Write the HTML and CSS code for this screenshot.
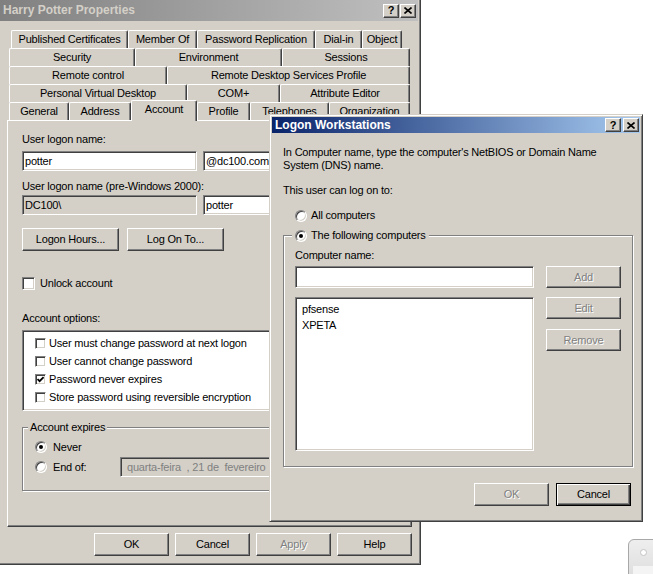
FILE: index.html
```html
<!DOCTYPE html>
<html lang="en">

<head>
    <meta charset="UTF-8">
    <title>Harry Potter Properties</title>
    <link rel="stylesheet" href="styles.css">
</head>

<body>
<div class="window props">
    <div class="caption inactive">
        <span class="caption-text">Harry Potter Properties</span>
        <span class="caption-btns">
            <span class="cap-btn">?</span>
            <span class="cap-btn"><svg width="8" height="7" viewBox="0 0 8 7"><path d="M0.5 0.5 L7.5 6.5 M7.5 0.5 L0.5 6.5" stroke="#000" stroke-width="1.6"/></svg></span>
        </span>
    </div>

    <div class="tabs">
        <div class="tab-row row1">
            <span class="tab">Published Certificates</span>
            <span class="tab">Member Of</span>
            <span class="tab">Password Replication</span>
            <span class="tab">Dial-in</span>
            <span class="tab">Object</span>
        </div>
        <div class="tab-row row2">
            <span class="tab">Security</span>
            <span class="tab">Environment</span>
            <span class="tab">Sessions</span>
        </div>
        <div class="tab-row row3">
            <span class="tab">Remote control</span>
            <span class="tab">Remote Desktop Services Profile</span>
        </div>
        <div class="tab-row row4">
            <span class="tab">Personal Virtual Desktop</span>
            <span class="tab">COM+</span>
            <span class="tab">Attribute Editor</span>
        </div>
        <div class="tab-row row5">
            <span class="tab">General</span>
            <span class="tab">Address</span>
            <span class="tab active">Account</span>
            <span class="tab">Profile</span>
            <span class="tab">Telephones</span>
            <span class="tab">Organization</span>
        </div>
    </div>

    <div class="panel">
        <div class="lbl">User logon name:</div>
        <div class="field-row first">
            <div class="edit name">potter</div>
            <div class="edit rest">@dc100.com</div>
        </div>

        <div class="lbl second">User logon name (pre-Windows 2000):</div>
        <div class="field-row">
            <div class="edit name readonly">DC100\</div>
            <div class="edit rest">potter</div>
        </div>

        <div class="btn-row">
            <span class="btn wide">Logon Hours...</span>
            <span class="btn wide">Log On To...</span>
        </div>

        <div class="check-row unlock">
            <span class="chk"></span>
            <span>Unlock account</span>
        </div>

        <div class="lbl options">Account options:</div>
        <div class="check-list">
            <div class="check-item"><span class="chk small"></span>User must change password at next logon</div>
            <div class="check-item"><span class="chk small"></span>User cannot change password</div>
            <div class="check-item"><span class="chk small"><svg width="7" height="7" viewBox="0 0 7 7"><path d="M0.5 3 L2.6 5.2 L6.6 1" fill="none" stroke="#000" stroke-width="1.8"/></svg></span>Password never expires</div>
            <div class="check-item"><span class="chk small"></span>Store password using reversible encryption</div>
        </div>

        <fieldset class="group expires">
            <legend>Account expires</legend>
            <div class="group-body">
                <div class="radio-row"><span class="radio on"></span>Never</div>
                <div class="radio-row">
                    <span class="radio-label"><span class="radio"></span>End of:</span>
                    <div class="edit date">quarta-feira &nbsp;, 21 de &nbsp;fevereiro</div>
                </div>
            </div>
        </fieldset>
    </div>

    <div class="dlg-buttons main">
        <span class="btn">OK</span>
        <span class="btn">Cancel</span>
        <span class="btn disabled">Apply</span>
        <span class="btn">Help</span>
    </div>
</div>

<div class="window dialog">
    <div class="caption active">
        <span class="caption-text">Logon Workstations</span>
        <span class="caption-btns">
            <span class="cap-btn">?</span>
            <span class="cap-btn"><svg width="8" height="7" viewBox="0 0 8 7"><path d="M0.5 0.5 L7.5 6.5 M7.5 0.5 L0.5 6.5" stroke="#000" stroke-width="1.6"/></svg></span>
        </span>
    </div>
    <div class="dialog-body">
        <p class="intro">In Computer name, type the computer's NetBIOS or Domain Name<br>System (DNS) name.</p>
        <p class="intro can">This user can log on to:</p>
        <div class="radio-row all"><span class="radio"></span>All computers</div>

        <fieldset class="group computers">
            <legend><span class="radio on"></span>The following computers</legend>
            <div class="group-body">
                <div class="lbl">Computer name:</div>
                <div class="pc-row">
                    <div class="edit pc-name"></div>
                    <span class="btn disabled">Add</span>
                </div>
                <div class="pc-row list-row">
                    <div class="listbox">
                        <div class="list-item">pfsense</div>
                        <div class="list-item">XPETA</div>
                    </div>
                    <div class="side-btns">
                        <span class="btn disabled">Edit</span>
                        <span class="btn disabled">Remove</span>
                    </div>
                </div>
            </div>
        </fieldset>

        <div class="dlg-buttons small">
            <span class="btn disabled">OK</span>
            <span class="btn default">Cancel</span>
        </div>
    </div>
</div>

<div class="peek">
    <span class="peek-dot"></span>
    <span class="peek-inner"></span>
</div>
</body>

</html>
```

FILE: styles.css
```css
body {
    margin: 0;
    background: #fff;
    font-family: "Liberation Sans", Arial, sans-serif;
    font-size: 11px;
    line-height: 13px;
    letter-spacing: -0.2px;
    color: #000;
    height: 574px;
    overflow: hidden;
    position: relative;
}

.window {
    box-sizing: border-box;
    background: #d4d0c8;
}

/* main properties window, top-left of it is off screen */
.props {
    width: 421px;
    height: 565px;
    padding-right: 2px;
    border-right: 1px solid #404040;
    border-bottom: 1px solid #404040;
    box-shadow: inset -1px -1px 0 #808080;
}

.caption {
    display: flex;
    align-items: center;
    justify-content: space-between;
    font-weight: bold;
    font-size: 12px;
    letter-spacing: 0;
    padding-left: 3px;
}

.caption.inactive {
    height: 21px;
    background: linear-gradient(90deg, #808080, #c0c0c0);
    color: #d4d0c8;
}

.caption.active {
    height: 16px;
    background: linear-gradient(90deg, #0a246a, #a6caf0);
    color: #fff;
}

.caption-btns {
    display: flex;
    gap: 1px;
    margin-right: 2px;
}

.dialog .caption-btns {
    gap: 2px;
    margin-right: 1px;
}

.cap-btn {
    box-sizing: border-box;
    width: 16px;
    height: 14px;
    display: flex;
    align-items: center;
    justify-content: center;
    background: #d4d0c8;
    color: #000;
    font-size: 11px;
    border: 1px solid;
    border-color: #fff #404040 #404040 #fff;
    box-shadow: inset -1px -1px 0 #808080;
}

/* tabs */
.tabs {
    margin: 9px 0 0 7px;
}

.tab-row {
    display: grid;
    grid-template-rows: 18px;
    margin-left: 2px;
}

.row1 { grid-template-columns: 117px 69px 118px 47px 40px; margin-left: 4px; }
.row2 { grid-template-columns: 126px 147px 128px; }
.row3 { grid-template-columns: 158px 243px; }
.row4 { grid-template-columns: 178px 93px 130px; }
.row5 { grid-template-columns: 60px 62px 66px 53px 79px 81px; }

.tab {
    box-sizing: border-box;
    height: 18px;
    border-top: 1px solid #fff;
    border-left: 1px solid #fff;
    border-right: 1px solid #404040;
    box-shadow: inset -1px 0 0 #808080;
    border-radius: 2px 2px 0 0;
    background: #d4d0c8;
    text-align: center;
    line-height: 17px;
    white-space: nowrap;
    overflow: hidden;
}

.tab.active {
    position: relative;
    z-index: 1;
    height: 21px;
    margin-top: -2px;
    line-height: 16px;
}

.panel {
    box-sizing: border-box;
    width: 405px;
    height: 407px;
    margin-left: 7px;
    padding: 12px 13px 0 14px;
    border: 1px solid;
    border-color: #fff #404040 #404040 #fff;
    box-shadow: inset -1px -1px 0 #808080;
}

.lbl.second { margin-top: 9px; }
.lbl.options { margin-top: 22px; }

.field-row {
    display: flex;
    gap: 6px;
    margin-top: 2px;
}

.field-row.first { margin-top: 5px; }

.edit {
    box-sizing: border-box;
    height: 20px;
    padding-left: 2px;
    line-height: 18px;
    background: #fff;
    border: 1px solid;
    border-color: #808080 #fff #fff #808080;
    box-shadow: inset 1px 1px 0 #404040, inset -1px -1px 0 #d4d0c8;
    white-space: nowrap;
    overflow: hidden;
}

.edit.name { width: 175px; }
.edit.rest { flex: 1; }
.edit.readonly { background: #d4d0c8; }

.btn {
    box-sizing: border-box;
    width: 75px;
    height: 23px;
    display: inline-flex;
    align-items: center;
    justify-content: center;
    background: #d4d0c8;
    border: 1px solid;
    border-color: #fff #404040 #404040 #fff;
    box-shadow: inset -1px -1px 0 #808080;
}

.btn.disabled {
    color: #808080;
    text-shadow: 1px 1px 0 #fff;
}

.btn.default {
    border-color: #000;
    box-shadow: inset 1px 1px 0 #fff, inset -1px -1px 0 #404040, inset -2px -2px 0 #808080;
}

.btn-row {
    display: flex;
    gap: 8px;
    margin-top: 13px;
}

.btn.wide { width: 97px; }

.check-row {
    display: flex;
    align-items: center;
    gap: 5px;
    height: 13px;
}

.check-row.unlock { margin-top: 26px; }

.chk {
    box-sizing: border-box;
    width: 13px;
    height: 13px;
    display: inline-flex;
    align-items: center;
    justify-content: center;
    background: #fff;
    border: 1px solid;
    border-color: #808080 #fff #fff #808080;
    box-shadow: inset 1px 1px 0 #404040, inset -1px -1px 0 #d4d0c8;
}

.chk.small {
    width: 11px;
    height: 11px;
    margin-right: 3px;
}

.check-list {
    box-sizing: border-box;
    height: 81px;
    margin-top: 5px;
    padding: 3px 0 0 12px;
    background: #fff;
    border: 1px solid;
    border-color: #808080 #fff #fff #808080;
    box-shadow: inset 1px 1px 0 #404040, inset -1px -1px 0 #d4d0c8;
}

.check-item {
    display: flex;
    align-items: center;
    height: 18px;
}

/* etched group boxes */
.group {
    margin: 0;
    padding: 0;
    border: 1px solid #808080;
    box-shadow: inset 1px 1px 0 #fff, 1px 1px 0 #fff;
}

.group legend {
    display: flex;
    align-items: center;
    gap: 4px;
    height: 13px;
    padding: 0 2px;
    background: #d4d0c8;
}

.expires {
    margin-top: 10px;
}

.expires legend { margin-left: 5px; }

.expires .group-body {
    padding: 3px 0 13px 12px;
}

.radio-row {
    display: flex;
    align-items: center;
    gap: 6px;
    height: 20px;
}

.radio-label {
    display: flex;
    align-items: center;
    gap: 6px;
    width: 79px;
}

.edit.date {
    flex: 1;
    padding-left: 6px;
    background: #d4d0c8;
    color: #808080;
}

.radio {
    box-sizing: border-box;
    position: relative;
    width: 12px;
    height: 12px;
    flex: none;
    border-radius: 50%;
    background: #fff;
    border: 1px solid;
    border-color: #808080 #fff #fff #808080;
    box-shadow: inset 1px 1px 0 #404040, inset -1px -1px 0 #d4d0c8;
}

.radio.on::after {
    content: "";
    position: absolute;
    left: 3px;
    top: 3px;
    width: 4px;
    height: 4px;
    border-radius: 50%;
    background: #000;
}

.dlg-buttons {
    display: flex;
    justify-content: flex-end;
    gap: 6px;
    margin-top: 6px;
}

.dlg-buttons.main {
    margin-right: 6px;
}

/* Logon Workstations dialog, floats over the properties window */
.dialog {
    position: absolute;
    left: 269px;
    top: 114px;
    width: 374px;
    height: 408px;
    padding: 2px;
    border: 1px solid;
    border-color: #d4d0c8 #404040 #404040 #d4d0c8;
    box-shadow: inset 1px 1px 0 #fff, inset -1px -1px 0 #808080;
}

.dialog-body {
    padding: 13px 7px 0 11px;
}

.intro {
    margin: 0;
}

.intro.can { margin-top: 12px; }

.radio-row.all {
    height: 13px;
    margin: 12px 0 0 12px;
    gap: 4px;
}

.computers {
    margin-top: 7px;
}

.computers legend {
    margin-left: 8px;
    padding: 0 3px;
}

.computers .group-body {
    padding: 7px 11px 15px 11px;
}

.pc-row {
    display: flex;
    justify-content: space-between;
    margin-top: 4px;
}

.pc-row .btn { height: 22px; }

.edit.pc-name {
    width: 239px;
    height: 22px;
}

.list-row { margin-top: 9px; }

.listbox {
    box-sizing: border-box;
    width: 239px;
    height: 154px;
    padding: 3px 0 0 6px;
    line-height: 16px;
    background: #fff;
    border: 1px solid;
    border-color: #808080 #fff #fff #808080;
    box-shadow: inset 1px 1px 0 #404040, inset -1px -1px 0 #d4d0c8;
}

.side-btns {
    display: flex;
    flex-direction: column;
    gap: 10px;
}

.dlg-buttons.small {
    gap: 7px;
    margin: 16px 2px 0 0;
}

/* corner of some other window peeking in */
.peek {
    position: absolute;
    left: 628px;
    top: 539px;
    width: 40px;
    height: 50px;
    border: 1px solid #a8a8a8;
    border-radius: 6px 0 0 0;
    background: linear-gradient(#eeeeee, #d8d8d8);
}

.peek-dot {
    position: absolute;
    left: 11px;
    top: 9px;
    width: 5px;
    height: 5px;
    border-radius: 50%;
    background: #fff;
    border: 1px solid #c4c4c4;
}

.peek-inner {
    position: absolute;
    left: 4px;
    top: 26px;
    width: 40px;
    height: 30px;
    background: #f4f4f4;
}
```
